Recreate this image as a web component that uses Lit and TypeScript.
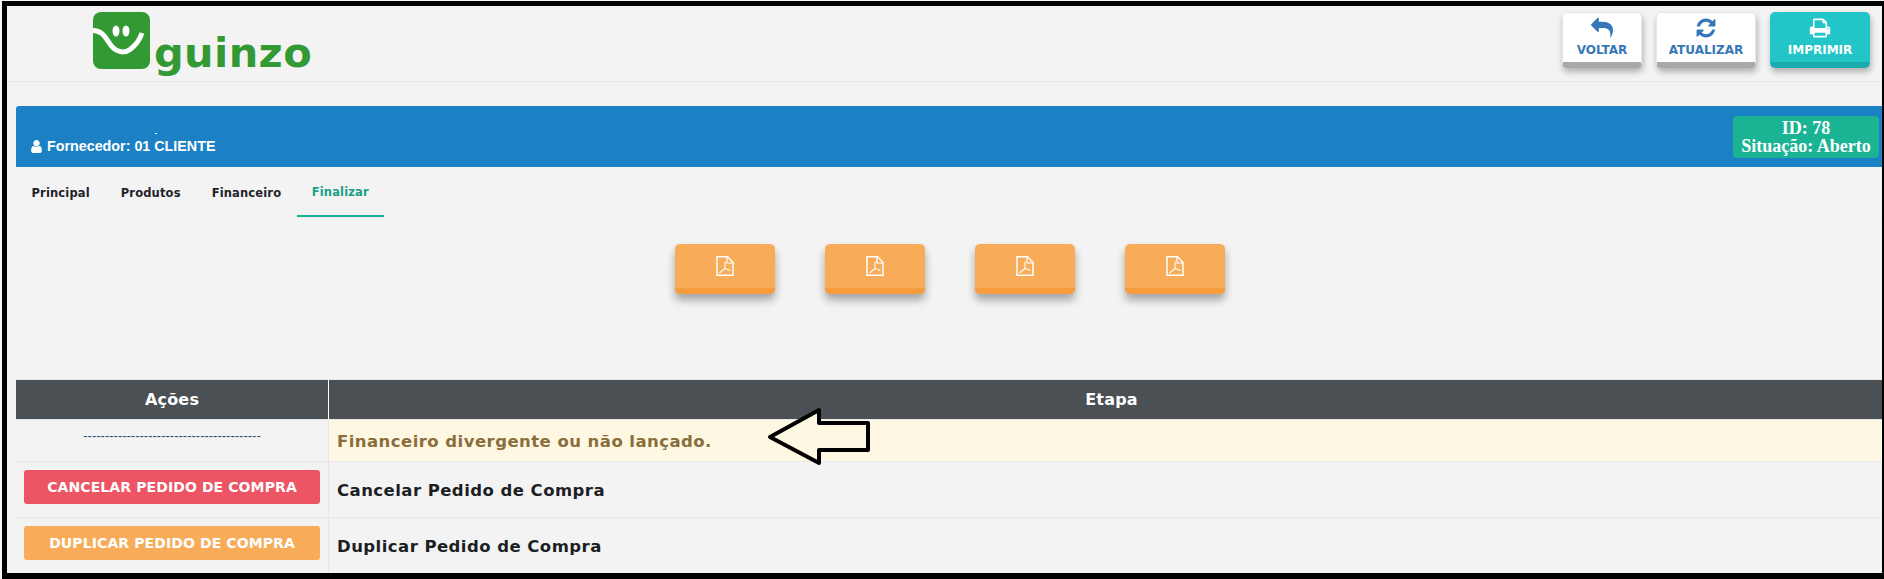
import { LitElement, html, css, svg } from "lit";
import { customElement } from "lit/decorators.js";

const ICON = {
  reply: "M1792 1120q0 166-127 451-3 7-10.500 24t-13.500 30-13 22q-12 17-28 17-15 0-23.500-10t-8.500-25q0-9 2.500-26.500t2.500-23.500q5-68 5-123 0-101-17.500-181t-48.500-138.500-80-101-105.500-69.500-133-42.500-154-21.500-175.500-6h-224v256q0 26-19 45t-45 19-45-19l-512-512q-19-19-19-45t19-45l512-512q19-19 45-19t45 19 19 45v256h224q713 0 875 403 53 134 53 333z",
  refresh: "M1639 1056q0 5-1 7-64 268-268 434.500t-478 166.500q-146 0-282.500-55t-243.500-157l-129 129q-19 19-45 19t-45-19-19-45v-448q0-26 19-45t45-19h448q26 0 45 19t19 45-19 45l-137 137q71 66 161 102t187 36q134 0 250-65t186-179q11-17 53-117 8-23 30-23h192q13 0 22.500 9.500t9.500 22.500zm25-800v448q0 26-19 45t-45 19h-448q-26 0-45-19t-19-45 19-45l138-138q-148-137-349-137-134 0-250 65t-186 179q-11 17-53 117-8 23-30 23h-199q-13 0-22.500-9.500t-9.500-22.500v-7q65-268 270-434.500t480-166.500q146 0 284 55.500t245 156.500l130-129q19-19 45-19t45 19 19 45z",
  print: "M448 1536h896v-256h-896v256zm0-640h896v-384h-160q-40 0-68-28t-28-68v-160h-640v640zm1152 64q0-26-19-45t-45-19-45 19-19 45 19 45 45 19 45-19 19-45zm128 0v416q0 13-9.500 22.500t-22.500 9.500h-224v160q0 40-28 68t-68 28h-960q-40 0-68-28t-28-68v-160h-224q-13 0-22.500-9.500t-9.500-22.500v-416q0-79 56.500-135.500t135.500-56.500h64v-544q0-40 28-68t68-28h672q40 0 88 20t76 48l152 152q28 28 48 76t20 88v256h64q79 0 135.500 56.500t56.500 135.500z",
  user: "M1536 1399q0 109-62.500 187t-150.500 78h-854q-88 0-150.500-78t-62.500-187q0-85 8.500-160.500t31.500-152 58.500-131 94-89 134.500-34.500q131 128 313 128t313-128q76 0 134.500 34.500t94 89 58.500 131 31.500 152 8.500 160.500zm-256-887q0 159-112.500 271.500t-271.500 112.500-271.500-112.500-112.500-271.500 112.500-271.500 271.500-112.500 271.500 112.500 112.500 271.500z",
};

const icon = (d: string, size: number) => html`<svg width=${size} height=${size} viewBox="0 0 1792 1792" fill="currentColor">${svg`<path d=${d}></path>`}</svg>`;
const pdfIcon = () => html`<svg width="18" height="20" viewBox="0 0 18 20" fill="none" stroke="currentColor">
  <path d="M1 .75H11.500L17 6.500V19.250H1Z" stroke-width="1.500"></path>
  <path d="M11 1V7H17" stroke-width="1.200"></path>
  <path d="M9 5.500V12.500M9 12.500L3.500 17M9 12.500L14.500 14.500" stroke-width="1.100"></path>
</svg>`;

@customElement("app-root")
export class AppRoot extends LitElement {
  static styles = css`
    :host { display: block; width: 1884px; height: 579px; background: #f6f6f6; overflow: hidden; }
    .frame {
      box-sizing: border-box; width: 1882px; height: 578px; margin: 1px 0 0 2px;
      border-style: solid; border-color: #000; border-width: 5px 2px 6px 5px;
      background: #f3f3f4; overflow: hidden; font-family: "DejaVu Sans", sans-serif;
    }
    .top { box-sizing: border-box; height: 76px; display: flex; justify-content: space-between; border-bottom: 1px solid #e7e7e7; }
    .logo { display: flex; margin: 6px 0 0 86px; }
    .mark { width: 57px; height: 57px; }
    .word { font-weight: 700; font-size: 41.5px; letter-spacing: .4px; line-height: 50px; color: #339933; margin: 16px 0 0 4px; }
    .actions { display: flex; gap: 14px; margin: 6px 12px 0 0; }
    .act {
      box-sizing: border-box; height: 56px; padding-top: 4px; border-radius: 5px; display: flex; flex-direction: column; align-items: center;
      background: #fff; color: #3577b8; border: 1px solid #e7e7e7; border-bottom: 6px solid #a9a9a9;
      font-weight: 700; font-size: 12px; line-height: 14px; box-shadow: 1px 4px 6px rgba(0,0,0,.28);
    }
    .act svg { display: block; margin-bottom: 4px; }
    .act.v { width: 80px; } .act.a { width: 100px; }
    .act.p { width: 100px; background: #23c6c8; color: #fff; border-color: #23c6c8; border-bottom-color: #1cabad; }
    .bar {
      height: 61px; margin: 24px 0 0 9px; background: #1c81c4; border-top-left-radius: 3px; color: #fff;
      display: flex; justify-content: space-between; padding: 0 3px 0 13px; box-sizing: border-box;
    }
    .who { display: flex; flex-direction: column; justify-content: flex-end; padding-bottom: 13px; font: 700 14.300px/16px "Liberation Sans", sans-serif; }
    .who .dot { width: 2px; height: 1px; background: #fff; margin: 0 0 4px 126px; }
    .who .line { display: flex; align-items: center; gap: 3px; }
    .badge {
      align-self: center; box-sizing: border-box; width: 146px; height: 42px; background: #1ab394; border-radius: 4px; text-align: center;
      font: 700 18px/18px "Liberation Serif", serif; padding-top: 3px;
    }
    .tabs { margin-left: 9px; display: flex; height: 50px; border-bottom: 1px solid #eeeeee; }
    .tab { padding: 0 15.500px; font-weight: 700; font-size: 11.500px; line-height: 52px; color: #1f2328; box-sizing: border-box; height: 50px; letter-spacing: .15px; }
    .tab.on { color: #16a085; border-bottom: 2px solid #1ab394; line-height: 50px; padding: 0 15px; }
    .pdfs { margin-left: 9px; display: flex; justify-content: center; gap: 50px; padding: 26px 0 0 2px; height: 135px; }
    .pdf {
      box-sizing: border-box; width: 100px; height: 50px; background: #f8ac59; border-bottom: 6px solid #f69c3c; border-radius: 5px; color: #fff;
      display: flex; justify-content: center; padding-top: 12px; box-shadow: 0 6px 8px rgba(0,0,0,.33);
    }
    table { margin-left: 9px; width: 1866px; border-collapse: collapse; table-layout: fixed; border-top: 1px solid #e7e7e7; }
    th { height: 39px; background: #4b5054; color: #fff; font-size: 16px; font-weight: 700; letter-spacing: .2px; padding: 0 0 0 12px; }
    th:first-child { width: 312px; border-right: 1px solid #fff; padding: 0; }
    td { padding: 2px 8px 0; border-top: 1px solid #e7e7e7; font-size: 16.500px; font-weight: 700; letter-spacing: .45px; color: #1b1f23; height: 56px; box-sizing: border-box; }
    td:first-child { border-right: 1px solid #e7e7e7; text-align: center; padding: 0 8px; }
    tr.warn td { height: 42px; }
    tr.warn td:last-child { background: #fef7e2; color: #8a6d3b; padding-top: 1px; }
    .dash { font: 400 13px/14px "Liberation Sans", sans-serif; letter-spacing: 0; color: #2a4a78; display: block; margin-bottom: 10px; }
    .btn { height: 34px; border-radius: 3px; color: #fff; font-size: 14px; line-height: 34px; letter-spacing: .1px; text-align: center; margin-bottom: 6px; }
    .btn.red { background: #ed5565; } .btn.orange { background: #f8ac59; }
    .arrow { position: absolute; left: 0; top: 0; pointer-events: none; }
  `;

  render() {
    return html`
      <div class="frame">
        <div class="top">
          <div class="logo">
            <svg class="mark" viewBox="0 0 57 57">
              <rect width="57" height="57" rx="8" fill="#339933"></rect>
              <path d="M0 18.500C9 18.500 12 25 17 32C22 40 31 42 37 37.500C43 33 47 27 49 21" fill="none" stroke="#fff" stroke-width="5"></path>
              <ellipse cx="23" cy="19" rx="3.500" ry="5.500" fill="#fff"></ellipse>
              <ellipse cx="33" cy="19" rx="3.500" ry="5.500" fill="#fff"></ellipse>
            </svg>
            <span class="word">guinzo</span>
          </div>
          <div class="actions">
            <div class="act v">${icon(ICON.reply, 22)}VOLTAR</div>
            <div class="act a">${icon(ICON.refresh, 22)}ATUALIZAR</div>
            <div class="act p">${icon(ICON.print, 22)}IMPRIMIR</div>
          </div>
        </div>
        <div class="bar">
          <div class="who">
            <div class="dot"></div>
            <div class="line">${icon(ICON.user, 15)}<span>Fornecedor: 01 CLIENTE</span></div>
          </div>
          <div class="badge">ID: 78<br />Situação: Aberto</div>
        </div>
        <div class="tabs">
          <div class="tab">Principal</div>
          <div class="tab">Produtos</div>
          <div class="tab">Financeiro</div>
          <div class="tab on">Finalizar</div>
        </div>
        <div class="pdfs">
          ${[0, 1, 2, 3].map(() => html`<div class="pdf">${pdfIcon()}</div>`)}
        </div>
        <table>
          <thead><tr><th>Ações</th><th>Etapa</th></tr></thead>
          <tbody>
            <tr class="warn"><td><span class="dash">-----------------------------------------</span></td><td>Financeiro divergente ou não lançado.</td></tr>
            <tr><td><div class="btn red">CANCELAR PEDIDO DE COMPRA</div></td><td>Cancelar Pedido de Compra</td></tr>
            <tr><td><div class="btn orange">DUPLICAR PEDIDO DE COMPRA</div></td><td>Duplicar Pedido de Compra</td></tr>
          </tbody>
        </table>
      </div>
      <svg class="arrow" width="1884" height="579"><polygon points="770,437 819,410 819,423 868,423 868,450 819,450 819,463" fill="#fef7e2" stroke="#000" stroke-width="4" stroke-linejoin="round"></polygon></svg>
    `;
  }
}
